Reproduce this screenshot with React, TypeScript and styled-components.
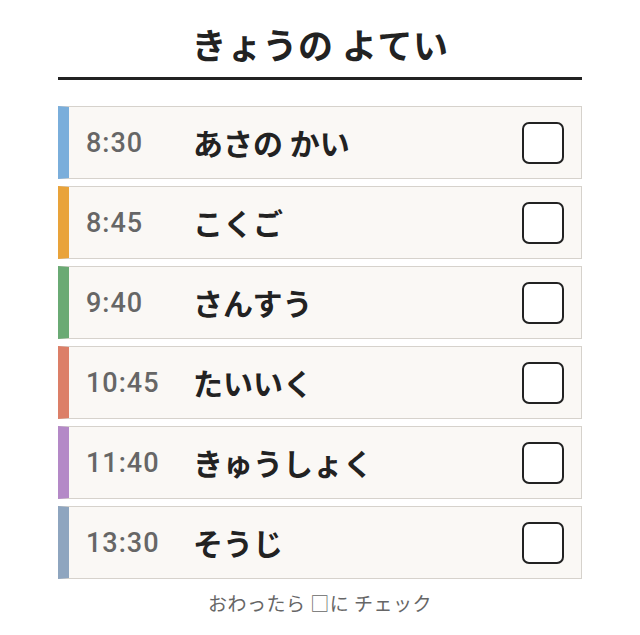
import React from 'react';
import styled, { createGlobalStyle } from 'styled-components';

const GlobalStyle = createGlobalStyle`
  html, body {
    margin: 0;
    padding: 0;
    background: #ffffff;
  }
  body {
    font-family: "Noto Sans CJK JP", "Noto Sans", sans-serif;
    color: #222222;
  }
`;

interface Item {
  time: string;
  name: string;
  color: string;
}

const items: Item[] = [
  { time: '8:30', name: 'あさの かい', color: '#7aaedb' },
  { time: '8:45', name: 'こくご', color: '#e9a33a' },
  { time: '9:40', name: 'さんすう', color: '#6aaa74' },
  { time: '10:45', name: 'たいいく', color: '#dc7f68' },
  { time: '11:40', name: 'きゅうしょく', color: '#b489c7' },
  { time: '13:30', name: 'そうじ', color: '#8ea5bf' },
];

const Page = styled.div`
  width: 640px;
  height: 635px;
  box-sizing: border-box;
  padding: 19px 58px 0 58px;
  display: flex;
  flex-direction: column;
`;

const Title = styled.h1`
  margin: 0;
  font-size: 35px;
  font-weight: 700;
  line-height: 50px;
  text-align: center;
  letter-spacing: 0.5px;
  color: #222;
  padding-bottom: 8px;
  border-bottom: 3px solid #222;
`;

const List = styled.div`
  margin-top: 26px;
  display: flex;
  flex-direction: column;
  gap: 7px;
`;

const Row = styled.div<{ $color: string }>`
  height: 73px;
  box-sizing: border-box;
  display: flex;
  align-items: center;
  background: #faf8f5;
  border: 1px solid #d6d2cc;
  border-left: 11px solid ${(p) => p.$color};
  padding: 0 17px 0 17px;
`;

const Time = styled.span`
  width: 107px;
  font-family: Roboto, "Liberation Sans", sans-serif;
  font-size: 27px;
  font-weight: 500;
  letter-spacing: 1px;
  color: #666;
`;

const Name = styled.span`
  flex: 1;
  font-size: 30px;
  font-weight: 700;
  color: #222;
  margin-top: -2px;
`;

const Box = styled.div`
  width: 42px;
  height: 42px;
  box-sizing: border-box;
  border: 2px solid #222;
  border-radius: 7px;
  background: #fff;
`;

const Footer = styled.p`
  margin: 10px 0 0;
  text-align: center;
  font-size: 19px;
  letter-spacing: 0.5px;
  color: #666;
`;

export default function App() {
  return (
    <>
      <GlobalStyle />
      <Page>
        <Title>きょうの よてい</Title>
        <List>
          {items.map((it) => (
            <Row key={it.time} $color={it.color}>
              <Time>{it.time}</Time>
              <Name>{it.name}</Name>
              <Box />
            </Row>
          ))}
        </List>
        <Footer>おわったら □に チェック</Footer>
      </Page>
    </>
  );
}
